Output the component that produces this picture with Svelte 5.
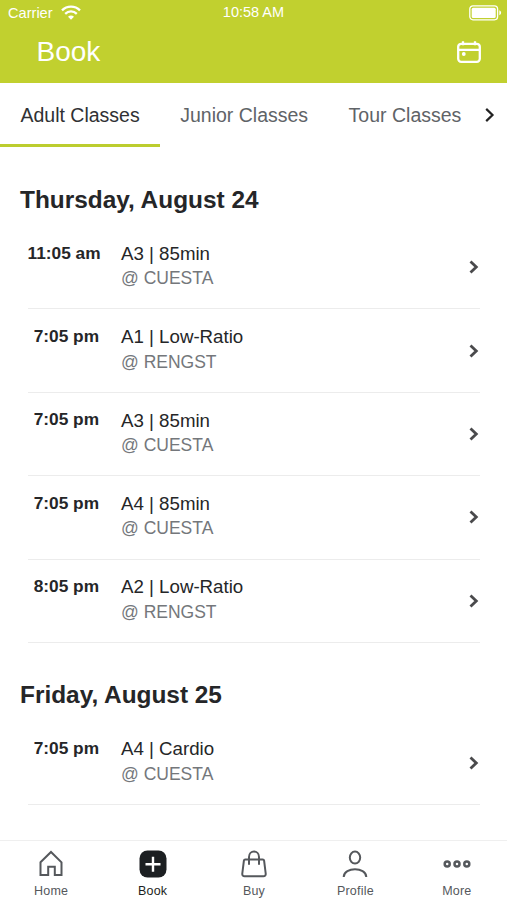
<script>
	const tabs = ['Adult Classes', 'Junior Classes', 'Tour Classes'];

	const days = [
		{
			date: 'Thursday, August 24',
			classes: [
				{ time: '11:05 am', name: 'A3 | 85min', place: '@ CUESTA' },
				{ time: '7:05 pm', name: 'A1 | Low-Ratio', place: '@ RENGST' },
				{ time: '7:05 pm', name: 'A3 | 85min', place: '@ CUESTA' },
				{ time: '7:05 pm', name: 'A4 | 85min', place: '@ CUESTA' },
				{ time: '8:05 pm', name: 'A2 | Low-Ratio', place: '@ RENGST' }
			]
		},
		{
			date: 'Friday, August 25',
			classes: [{ time: '7:05 pm', name: 'A4 | Cardio', place: '@ CUESTA' }]
		}
	];

	const nav = ['Home', 'Book', 'Buy', 'Profile', 'More'];

	let activeTab = $state('Adult Classes');
	let activeNav = $state('Book');
</script>

<div class="app">
	<header>
		<div class="status">
			<div class="carrier">
				<span>Carrier</span>
				<svg width="20" height="15" viewBox="0 0 20 15" fill="none" stroke="#fff" stroke-width="2.3">
					<path d="M1 5.4C6 .4 14 .4 19 5.4" />
					<path d="M4.2 8.8c3.3-3.2 8.3-3.2 11.600 0" />
					<path d="M7 11.700c1.800-1.600 4.200-1.600 6 0l-3 3z" fill="#fff" stroke="none" />
				</svg>
			</div>
			<span class="clock">10:58 AM</span>
			<svg class="battery" width="33" height="16" viewBox="0 0 33 16">
				<rect x=".8" y=".8" width="27.8" height="14" rx="3.2" fill="none" stroke="#fff" stroke-width="1.3" />
				<rect x="2.7" y="2.7" width="24" height="10.2" rx="1.5" fill="#fff" />
				<path d="M30.3 5.3c2.4.9 2.4 4.1 0 5z" fill="#fff" />
			</svg>
		</div>
		<div class="title">
			<h1>Book</h1>
			<svg width="26" height="24" viewBox="0 0 26 24" fill="none" stroke="#fff" stroke-width="2.3">
				<rect x="2.2" y="3.8" width="21.6" height="18" rx="3" />
				<path d="M2 9.800h22M7 1.200v4M19 1.200v4" />
				<circle cx="7.800" cy="14" r="1.900" fill="#fff" stroke="none" />
			</svg>
		</div>
	</header>

	<div class="tabs">
		{#each tabs as tab}
			<button class:active={tab === activeTab} onclick={() => (activeTab = tab)}>{tab}</button>
		{/each}
		<svg width="10" height="16" viewBox="0 0 10 16" fill="none" stroke="#222" stroke-width="2.2">
			<path d="M1.2 1.9 7.5 8l-6.3 6.1" />
		</svg>
	</div>

	<main>
		{#each days as day}
			<section>
				<h2>{day.date}</h2>
				<ul>
					{#each day.classes as item}
						<li>
							<span class="time">{item.time}</span>
							<div class="info">
								<p>{item.name}</p>
								<p class="place">{item.place}</p>
							</div>
							<svg width="10" height="16" viewBox="0 0 10 16" fill="none" stroke="#4a4a4c" stroke-width="2.8">
								<path d="M1.500 2.400 7.300 8l-5.800 5.600" />
							</svg>
						</li>
					{/each}
				</ul>
			</section>
		{/each}
	</main>

	<nav>
		{#each nav as item}
			<button class:active={item === activeNav} onclick={() => (activeNav = item)}>
				<svg width="28" height="30" viewBox="0 0 28 30" fill="none" stroke="#55585c" stroke-width="2">
					{#if item === 'Home'}
						<path d="M3.5 13.3 14 3l10.5 10.3V26h-6.7v-8.3h-6.6V26H3.5z" />
					{:else if item === 'Book'}
						<rect x=".5" y="1.5" width="27" height="27" rx="8" fill="#1c1f22" stroke="none" />
						<path d="M14 7.7v15M6.5 15.2h15" stroke="#fff" stroke-width="2.4" />
					{:else if item === 'Buy'}
						<path d="M5.3 10.5h17.4c.8 0 1.3.5 1.4 1.2l1.6 12.8c.2 1.7-.8 2.8-2.3 2.8H4.6c-1.5 0-2.5-1.1-2.3-2.8l1.6-12.8c.1-.7.6-1.2 1.4-1.2z" />
						<path d="M9 15.8V8c0-7.3 10-7.3 10 0v7.8" />
					{:else if item === 'Profile'}
						<ellipse cx="14" cy="8.6" rx="5.2" ry="6" />
						<path d="M2.7 28c.5-10.3 22.1-10.3 22.6 0" />
					{:else}
						<g stroke-width="2.5">
							<circle cx="4.2" cy="15" r="2.5" />
							<circle cx="14" cy="15" r="2.5" />
							<circle cx="23.8" cy="15" r="2.5" />
						</g>
					{/if}
				</svg>
				<span>{item}</span>
			</button>
		{/each}
	</nav>
</div>

<style>
	:global(body) {
		margin: 0;
	}

	.app {
		width: 507px;
		height: 900px;
		display: flex;
		flex-direction: column;
		overflow: hidden;
		background: #fff;
		color: #252628;
		font-family: 'Liberation Sans', Arial, sans-serif;
	}

	h1,
	h2,
	p,
	ul {
		margin: 0;
		padding: 0;
	}

	svg {
		display: block;
		flex: none;
	}

	button {
		border: 0;
		padding: 0;
		background: none;
		font-family: inherit;
	}

	header {
		height: 83px;
		flex: none;
		background: #c1d02f;
		color: #fff;
	}

	.status {
		height: 25px;
		display: grid;
		grid-template-columns: 1fr auto 1fr;
		align-items: center;
		padding: 0 5px 0 8px;
		font-size: 14.6px;
	}

	.carrier {
		display: flex;
		align-items: center;
		gap: 8px;
	}

	.clock {
		padding: 0 3px 2px 0;
		font-size: 14.5px;
	}

	.battery {
		justify-self: end;
	}

	.title {
		height: 54px;
		display: flex;
		align-items: center;
		justify-content: space-between;
		padding: 0 25px 0 36.5px;
	}

	h1 {
		font-size: 28px;
		font-weight: 400;
	}

	.tabs {
		height: 64px;
		flex: none;
		display: flex;
		align-items: center;
	}

	.tabs button {
		height: 64px;
		box-sizing: border-box;
		padding: 3px 20px 0 20.5px;
		border-bottom: 3px solid transparent;
		font-size: 19.5px;
		color: #606367;
		white-space: nowrap;
	}

	.tabs button.active {
		border-color: #bccd2e;
		color: #303134;
	}

	.tabs svg {
		margin-left: 3.5px;
	}

	main {
		flex: 1;
		min-height: 0;
	}

	h2 {
		padding: 37px 20px 11px;
		font-size: 24.4px;
		line-height: 31px;
	}

	section + section h2 {
		padding-top: 36.5px;
	}

	ul {
		padding: 0 27px 0 28px;
		list-style: none;
	}

	li {
		height: 83.4px;
		box-sizing: border-box;
		display: flex;
		align-items: center;
		border-bottom: 1px solid #ececec;
	}

	.time {
		width: 71.5px;
		align-self: flex-start;
		padding-top: 14.7px;
		font-size: 17.3px;
		font-weight: 700;
		line-height: 25px;
		text-align: right;
		white-space: nowrap;
		margin-left: -0.5px;
	}

	.info {
		flex: 1;
		margin: 0 0 2px 22px;
		font-size: 18.7px;
		line-height: 25.4px;
	}

	.place {
		font-size: 17.5px;
		color: #74777b;
	}

	li svg {
		margin-right: 1.5px;
	}

	nav {
		height: 60px;
		box-sizing: border-box;
		flex: none;
		display: grid;
		grid-template-columns: repeat(5, 1fr);
		border-top: 1px solid #efefef;
	}

	nav button {
		display: flex;
		flex-direction: column;
		align-items: center;
		gap: 5px;
		padding: 8px 0 0 1px;
		font-size: 12.5px;
		line-height: 15px;
		letter-spacing: 0.2px;
		color: #55585c;
	}

	nav .active {
		color: #1c1f22;
	}
</style>
